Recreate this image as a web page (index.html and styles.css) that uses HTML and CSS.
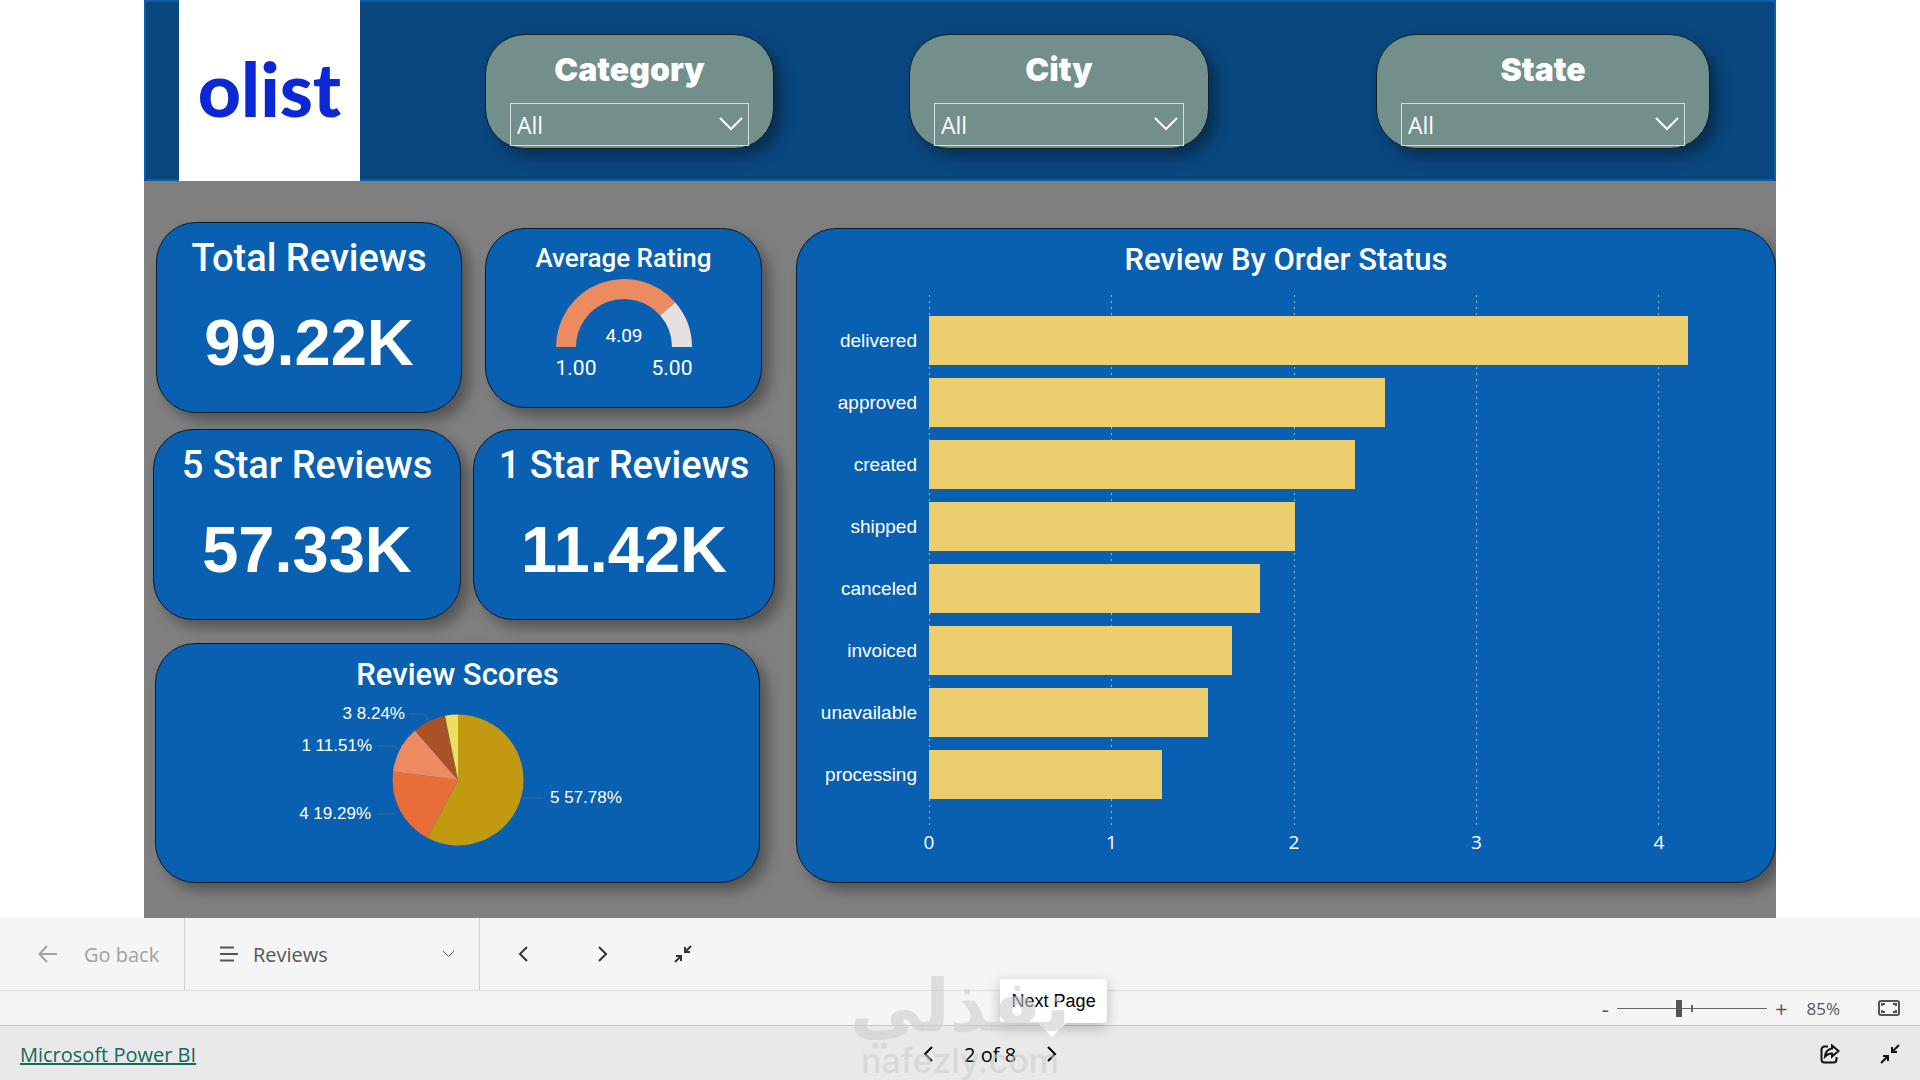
FILE: index.html
```html
<!DOCTYPE html>
<html lang="en">
  <head>
    <meta charset="UTF-8" />
    <meta name="viewport" content="width=device-width, initial-scale=1.0" />
    <title>Reviews - Microsoft Power BI</title>
    <link rel="stylesheet" href="styles.css">
  </head>
  <body>
    <main class="report">
      <header class="header">
        <div class="logo">olist</div>
        <div class="slicers">
          <div class="slicer category">
            <label for="category">Category</label>
            <div class="select-box">
              <select id="category"><option>All</option></select>
              <svg width="24" height="14" viewBox="0 0 24 14"><path d="M1 1l11 11L23 1" /></svg>
            </div>
          </div>
          <div class="slicer city">
            <label for="city">City</label>
            <div class="select-box">
              <select id="city"><option>All</option></select>
              <svg width="24" height="14" viewBox="0 0 24 14"><path d="M1 1l11 11L23 1" /></svg>
            </div>
          </div>
          <div class="slicer state">
            <label for="state">State</label>
            <div class="select-box">
              <select id="state"><option>All</option></select>
              <svg width="24" height="14" viewBox="0 0 24 14"><path d="M1 1l11 11L23 1" /></svg>
            </div>
          </div>
        </div>
      </header>

      <div class="dashboard">
        <div class="left">
          <div class="row row-top">
            <section class="card kpi">
              <h2>Total Reviews</h2>
              <p>99.22K</p>
            </section>
            <section class="card gauge">
              <h2>Average Rating</h2>
              <svg width="160" height="104" viewBox="0 0 160 104">
                <path fill="#ed8b60" d="M12 69A68 68 0 0 1 131.300 24.400L116.200 37.500A48 48 0 0 0 32 69Z" />
                <path fill="#e6e1dd" d="M131.300 24.400A68 68 0 0 1 148 69H128A48 48 0 0 0 116.200 37.500Z" />
                <text class="gauge-value" x="80" y="64">4.09</text>
                <text x="32" y="97">1.00</text>
                <text x="128" y="97">5.00</text>
              </svg>
            </section>
          </div>

          <div class="row row-middle">
            <section class="card kpi">
              <h2>5 Star Reviews</h2>
              <p>57.33K</p>
            </section>
            <section class="card kpi">
              <h2>1 Star Reviews</h2>
              <p>11.42K</p>
            </section>
          </div>

          <section class="card scores">
            <h2>Review Scores</h2>
            <svg width="400" height="160" viewBox="0 0 400 160">
              <path fill="#c19a12" d="M200 85V19.500A65.500 65.500 0 1 1 169.200 142.800Z" />
              <path fill="#e96d38" d="M200 85L169.200 142.800A65.500 65.500 0 0 1 135.100 76.500Z" />
              <path fill="#ee8a60" d="M200 85L135.100 76.500A65.500 65.500 0 0 1 156.900 35.600Z" />
              <path fill="#a95228" d="M200 85L156.900 35.600A65.500 65.500 0 0 1 187 20.800Z" />
              <path fill="#eadf5e" d="M200 85L187 20.800A65.500 65.500 0 0 1 200 19.500Z" />
              <path class="leader" d="M151 19h16l4 8M119 51h16l6 3M119 119h16l5 -3M285 103h-16l-4 -1" />
              <text class="end" x="147" y="24">3 8.24%</text>
              <text class="end" x="114" y="56">1 11.51%</text>
              <text class="end" x="113" y="124">4 19.29%</text>
              <text x="292" y="108">5 57.78%</text>
            </svg>
          </section>
        </div>

        <section class="card status">
          <h2>Review By Order Status</h2>
          <div class="chart">
            <ul class="labels">
              <li>delivered</li>
              <li>approved</li>
              <li>created</li>
              <li>shipped</li>
              <li>canceled</li>
              <li>invoiced</li>
              <li>unavailable</li>
              <li>processing</li>
            </ul>
            <div class="plot">
              <div class="gridlines"><i></i><i></i><i></i><i></i><i></i></div>
              <div class="bars">
                <div class="bar" style="width: 104%"></div>
                <div class="bar" style="width: 62.500%"></div>
                <div class="bar" style="width: 58.400%"></div>
                <div class="bar" style="width: 50.200%"></div>
                <div class="bar" style="width: 45.300%"></div>
                <div class="bar" style="width: 41.500%"></div>
                <div class="bar" style="width: 38.200%"></div>
                <div class="bar" style="width: 31.900%"></div>
              </div>
            </div>
            <div class="axis"><span>0</span><span>1</span><span>2</span><span>3</span><span>4</span></div>
          </div>
        </section>
      </div>
    </main>

    <nav class="page-nav">
      <button class="go-back" disabled>
        <svg width="20" height="18" viewBox="0 0 20 18"><path d="M19 9H2M9 1L1.500 9L9 17" /></svg>
        Go back
      </button>
      <button class="page-menu">
        <svg width="20" height="16" viewBox="0 0 20 16"><path d="M1 1.500h14M1 8h18M1 14.500h14" /></svg>
        Reviews
        <svg class="caret" width="13" height="8" viewBox="0 0 13 8"><path d="M1 1l5.500 5.500L12 1" /></svg>
      </button>
      <div class="nav-icons">
        <button aria-label="Previous page">
          <svg width="10" height="16" viewBox="0 0 10 16"><path d="M9 1L2 8l7 7" /></svg>
        </button>
        <button aria-label="Next page">
          <svg width="10" height="16" viewBox="0 0 10 16"><path d="M1 1l7 7l-7 7" /></svg>
        </button>
        <button aria-label="Exit full screen">
          <svg width="20" height="20" viewBox="0 0 20 20"><path d="M18 2l-6 6M12 3v5h5M2 18l6-6M3 12h5v5" /></svg>
        </button>
      </div>
    </nav>

    <div class="zoom-bar">
      <button aria-label="Zoom out">-</button>
      <input type="range" min="0" max="100" value="41" aria-label="Zoom" />
      <button aria-label="Zoom in">+</button>
      <span class="zoom-value">85%</span>
      <button class="fit" aria-label="Fit to page">
        <svg width="22" height="16" viewBox="0 0 22 16"><rect x="1" y="1" width="20" height="14" rx="2" /><path d="M4 6V4h3M15 4h3v2M18 10v2h-3M7 12H4v-2" /></svg>
      </button>
    </div>

    <footer class="footer">
      <div class="footer-left"><a href="#">Microsoft Power BI</a></div>
      <div class="pager">
        <button aria-label="Previous page">
          <svg width="10" height="16" viewBox="0 0 10 16"><path d="M9 1L2 8l7 7" /></svg>
        </button>
        <span>2 of 8</span>
        <button class="next" aria-label="Next page">
          <svg width="10" height="16" viewBox="0 0 10 16"><path d="M1 1l7 7l-7 7" /></svg>
          <span class="tooltip">Next Page</span>
        </button>
      </div>
      <div class="footer-right">
        <button aria-label="Share">
          <svg width="20" height="20" viewBox="0 0 20 20"><path d="M8 2.500H4.500A3 3 0 0 0 1.500 5.500v10a3 3 0 0 0 3 3h9a3 3 0 0 0 3-3V13M12 1.500l6.500 5.500l-6.500 5.500V9.500C9 9.300 7 10.500 5 12.500C5.500 8 8 5 12 4.500Z" /></svg>
        </button>
        <button aria-label="Exit full screen">
          <svg width="20" height="20" viewBox="0 0 20 20"><path d="M19 1l-7 7M12 3v5h5M1 19l7-7M3 12h5v5" /></svg>
        </button>
      </div>
    </footer>

    <div class="watermark">
      <span class="watermark-ar" lang="ar" dir="rtl">نفذلي</span>
      <span class="watermark-en">nafezly.com</span>
    </div>
  </body>
</html>
```
FILE: styles.css
```css
* {
  box-sizing: border-box;
}

body {
  margin: 0;
  min-height: 100vh;
  display: flex;
  flex-direction: column;
  position: relative;
  background: #fff;
  font-family: "Open Sans", "Noto Sans", sans-serif;
}

h2,
p,
ul {
  margin: 0;
  padding: 0;
}

button {
  display: flex;
  align-items: center;
  padding: 0;
  border: none;
  background: none;
  font: inherit;
  color: inherit;
  cursor: pointer;
}

svg {
  display: block;
  fill: none;
}

button svg,
.select-box svg {
  stroke: currentColor;
  stroke-width: 2;
}

/* report canvas */
.report {
  width: 85%;
  margin: 0 auto;
  flex: 1;
  display: flex;
  flex-direction: column;
  background: #808080;
  overflow: hidden;
}

.header {
  display: flex;
  height: 181px;
  padding-left: 35px;
  background: #0a477f;
  box-shadow: inset 0 0 0 2px #0d5cab;
}

.logo {
  width: 181px;
  background: #fff;
  color: #0c28d4;
  font-family: Lato, sans-serif;
  font-size: 75px;
  font-weight: 900;
  line-height: 176px;
  text-align: center;
}

.slicers {
  flex: 1;
  display: grid;
  grid-template-columns: 125fr 289fr 135fr 300fr 167fr 334fr 66fr;
  align-items: start;
  padding-top: 34px;
}

.slicer {
  height: 115px;
  padding: 14px 24px 0;
  border: 1px solid #10201f;
  border-radius: 40px;
  background: #728f8c;
  box-shadow: 8px 8px 14px rgba(0, 0, 0, 0.35);
  color: #fff;
  text-align: center;
}

.category {
  grid-column: 2;
}

.city {
  grid-column: 4;
}

.state {
  grid-column: 6;
}

.slicer label {
  display: block;
  margin-bottom: 12px;
  font-family: Inter, sans-serif;
  font-size: 32px;
  font-weight: 900;
  line-height: 42px;
}

.select-box {
  position: relative;
}

.select-box select {
  display: block;
  width: 100%;
  height: 43px;
  padding: 0 6px;
  appearance: none;
  border: 1px solid #d3dfdd;
  border-radius: 0;
  background: transparent;
  color: #fff;
  font-family: "Open Sans", sans-serif;
  font-size: 23px;
}

.select-box svg {
  position: absolute;
  right: 6px;
  top: 14px;
  pointer-events: none;
}

.dashboard {
  flex: 1;
  display: grid;
  grid-template-columns: 622fr 980fr;
  gap: 21px;
  padding: 41px 0 35px 9px;
}

.left {
  display: flex;
  flex-direction: column;
}

.row {
  display: grid;
}

.row-top {
  grid-template-columns: 306fr 277fr;
  gap: 23px;
  align-items: center;
  padding: 0 13px 0 3px;
  margin-bottom: 16px;
}

.row-middle {
  grid-template-columns: 308fr 302fr;
  gap: 12px;
  margin-bottom: 23px;
}

.card {
  border: 1px solid #0a1b2c;
  border-radius: 40px;
  background: #0a60b0;
  box-shadow: 8px 8px 14px rgba(0, 0, 0, 0.35);
  color: #fff;
}

.card h2 {
  font-family: Roboto, sans-serif;
  font-size: 31px;
  font-weight: 500;
  line-height: 34px;
  text-align: center;
}

.kpi {
  height: 191px;
  padding-top: 12px;
}

.card.kpi h2 {
  font-size: 38px;
  line-height: 46px;
}

.kpi p {
  margin-top: 24px;
  font-family: "Liberation Sans", Arial, sans-serif;
  font-size: 65px;
  font-weight: bold;
  line-height: 76px;
  text-align: center;
}

.gauge {
  height: 180px;
  padding-top: 12px;
}

.card.gauge h2 {
  font-size: 26px;
}

.gauge svg {
  margin: 3px auto 0;
}

.gauge text {
  fill: #fff;
  font-family: Roboto, sans-serif;
  font-size: 21px;
  text-anchor: middle;
}

.gauge .gauge-value {
  font-size: 19px;
}

.scores {
  height: 240px;
  margin: 0 15px 0 2px;
  padding-top: 14px;
}

.scores svg {
  margin: 3px auto 0;
}

.scores text {
  fill: #fff;
  font-family: "Liberation Sans", Arial, sans-serif;
  font-size: 17px;
}

.scores .end {
  text-anchor: end;
}

.leader {
  stroke: #3c6a99;
}

.status {
  margin-top: 6px;
  padding: 14px 116px 0 0;
}

.status h2 {
  margin-right: -116px;
}

.chart {
  display: grid;
  grid-template-columns: 132px 1fr;
  padding-top: 18px;
}

.labels {
  list-style: none;
  padding: 21px 12px 26px 0;
  font-family: "Liberation Sans", Arial, sans-serif;
  font-size: 19px;
  text-align: right;
}

.labels li {
  height: 49px;
  margin-bottom: 13px;
  line-height: 50px;
}

.labels li:last-child {
  margin-bottom: 0;
}

.plot {
  display: grid;
}

.gridlines,
.bars {
  grid-area: 1 / 1;
}

.gridlines {
  display: flex;
  justify-content: space-between;
}

.gridlines i {
  width: 1px;
  background: repeating-linear-gradient(#8fbbe0 0 2px, transparent 2px 6px);
}

.bars {
  display: flex;
  flex-direction: column;
  gap: 13px;
  padding: 21px 0 26px;
}

.bar {
  height: 49px;
  background: #ebcf6e;
}

.axis {
  grid-column: 2;
  display: flex;
  justify-content: space-between;
  margin: 0 -10px;
  font-size: 19px;
  line-height: 34px;
}

.axis span {
  width: 20px;
  text-align: center;
}

/* bottom bars */
.page-nav {
  display: flex;
  height: 73px;
  border-bottom: 1px solid #dcdcdc;
  background: #f5f5f5;
  color: #333;
  font-size: 20px;
}

.page-nav > button {
  border-right: 1px solid #d0d0d0;
}

.go-back {
  width: 185px;
  padding-left: 38px;
  gap: 26px;
  color: #a0a0a0;
}

.page-menu {
  width: 295px;
  padding: 0 24px 0 34px;
  gap: 14px;
  color: #555;
}

.page-menu .caret {
  margin-left: auto;
  stroke-width: 1;
}

.nav-icons {
  display: flex;
  gap: 40px;
  padding-left: 23px;
}

.nav-icons button {
  width: 40px;
  justify-content: center;
}

.zoom-bar {
  display: flex;
  align-items: center;
  justify-content: flex-end;
  height: 35px;
  padding-right: 20px;
  border-bottom: 1px solid #c8c8c8;
  background: #f5f5f5;
  color: #555;
  font-size: 22px;
}

.zoom-bar input {
  width: 150px;
  height: 18px;
  margin: 0 8px;
  appearance: none;
  background:
    linear-gradient(#666, #666) center / 2px 7px no-repeat,
    linear-gradient(#666, #666) center / 100% 1px no-repeat;
}

.zoom-bar input::-webkit-slider-thumb {
  appearance: none;
  width: 6px;
  height: 17px;
  background: #555;
}

.zoom-value {
  margin-left: 19px;
  font-size: 17px;
}

.fit {
  margin-left: 38px;
}

.footer {
  display: flex;
  align-items: center;
  height: 54px;
  padding: 2px 20px 0;
  background: #e9e9e9;
  color: #111;
  font-size: 20px;
}

.footer-left {
  flex: 15;
}

.footer-left a {
  color: #11695a;
  font-weight: 500;
}

.pager {
  display: flex;
  align-items: center;
  gap: 31px;
  color: #000;
  font-weight: 500;
}

.next {
  position: relative;
}

.footer-right {
  flex: 14;
  display: flex;
  justify-content: flex-end;
  gap: 40px;
}

.tooltip {
  position: absolute;
  bottom: 39px;
  left: -47px;
  width: 107px;
  border-radius: 3px;
  background: #fff;
  box-shadow: 0 4px 14px rgba(0, 0, 0, 0.25);
  font-family: "Liberation Sans", Arial, sans-serif;
  font-size: 18px;
  font-weight: normal;
  line-height: 44px;
}

.tooltip::after {
  content: "";
  position: absolute;
  top: 100%;
  left: 38px;
  border: 14px solid transparent;
  border-top-color: #fff;
  border-bottom: none;
}

.watermark {
  position: absolute;
  left: 50%;
  bottom: 0;
  width: 212px;
  margin-left: -106px;
  display: flex;
  flex-direction: column;
  align-items: center;
  color: rgba(205, 205, 205, 0.6);
  pointer-events: none;
}

.watermark-ar {
  font-family: "DejaVu Sans", sans-serif;
  font-size: 72px;
  font-weight: bold;
  line-height: 72px;
}

.watermark-en {
  font-family: Inter, sans-serif;
  font-size: 34px;
  font-weight: 500;
  line-height: 38px;
}
```
